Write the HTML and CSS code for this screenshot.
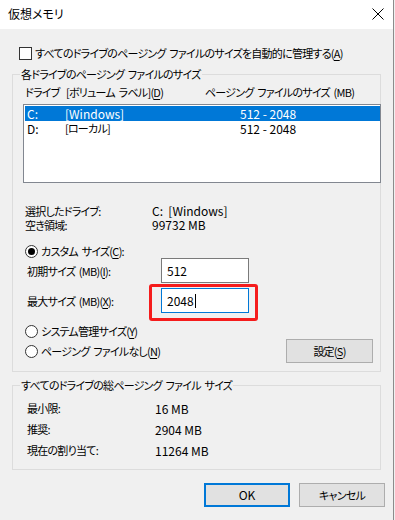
FILE: index.html
```html
<!DOCTYPE html>
<html lang="ja">
<head>
<meta charset="utf-8">
<title>仮想メモリ</title>
<link rel="stylesheet" href="styles.css">
</head>
<body>
<div class="window">
  <div class="titlebar">
    <span class="title">仮想メモリ</span>
    <svg class="close" width="12" height="12" viewBox="0 0 12 12"><path d="M0.5 0.5 L11.5 11.5 M11.5 0.5 L0.5 11.5" stroke="#000" stroke-width="1" fill="none"/></svg>
  </div>
  <div class="content">
    <div class="auto"><span class="checkbox"></span><span class="txt">すべてのドライブのページング ファイルのサイズを自動的に管理する(<u>A</u>)</span></div>

    <fieldset class="group g1">
      <legend>各ドライブのページング ファイルのサイズ</legend>
      <div class="head"><span>ドライブ</span><span>[ボリューム ラベル](<u>D</u>)</span><span>ページング ファイルのサイズ (MB)</span></div>
      <div class="list">
        <div class="row sel"><span class="lat">C:</span><span class="lat">[Windows]</span><span class="lat">512 - 2048</span></div>
        <div class="row"><span class="lat">D:</span><span>[ローカル]</span><span class="lat">512 - 2048</span></div>
      </div>
      <div class="info">
        <span>選択したドライブ:</span><span class="lat">C:&nbsp; [Windows]</span>
        <span>空き領域:</span><span class="lat">99732 MB</span>
      </div>
      <div class="radio r-custom"><span class="rb on"></span><span>カスタム サイズ(<u>C</u>):</span></div>
      <div class="field f1"><span class="flabel">初期サイズ (MB)(<u>I</u>):</span><span class="edit lat">512</span></div>
      <div class="field f2"><span class="flabel">最大サイズ (MB)(<u>X</u>):</span><span class="editwrap"><span class="edit focus lat">2048<span class="caret"></span></span><span class="mark"></span></span></div>
      <div class="radio r-sys"><span class="rb"></span><span>システム管理サイズ(<u>Y</u>)</span></div>
      <div class="lastrow">
        <div class="radio"><span class="rb"></span><span>ページング ファイルなし(<u>N</u>)</span></div>
        <span class="btn set">設定(<u>S</u>)</span>
      </div>
    </fieldset>

    <fieldset class="group g2">
      <legend>すべてのドライブの総ページング ファイル サイズ</legend>
      <div class="totals">
        <span>最小限:</span><span class="lat">16 MB</span>
        <span>推奨:</span><span class="lat">2904 MB</span>
        <span>現在の割り当て:</span><span class="lat">11264 MB</span>
      </div>
    </fieldset>

    <div class="buttons">
      <span class="btn ok lat">OK</span>
      <span class="btn cancel">キャンセル</span>
    </div>
  </div>
</div>
</body>
</html>
```
FILE: styles.css
```css
html, body {
  margin: 0;
  padding: 0;
  background: #f0f0f0;
}
body {
  font-family: "Noto Sans CJK JP", "Noto Sans", sans-serif;
  font-size: 11px;
  letter-spacing: -0.75px;
  word-spacing: 2px;
  line-height: 14px;
  color: #000;
  font-feature-settings: "palt";
  white-space: nowrap;
}
.lat {
  font-size: 12px;
  letter-spacing: 0;
  word-spacing: 0;
}
u { text-decoration-thickness: 1px; text-underline-offset: 2px; }
.window {
  width: 393px;
  height: 520px;
  border-right: 1px solid #8c8c8c;
  background: #f0f0f0;
  overflow: hidden;
}
.titlebar {
  height: 29px;
  background: #fff;
  display: flex;
  align-items: center;
  justify-content: space-between;
  padding: 0 9px 0 8px;
}
.title { font-size: 12px; letter-spacing: 0; margin-top: -2px; }
.close { margin-top: -1px; }
.content { padding-top: 17px; }
.auto {
  display: flex;
  align-items: center;
  height: 14px;
  padding-left: 19px;
}
.checkbox {
  width: 13px; height: 13px;
  box-sizing: border-box;
  border: 1px solid #333;
  background: #fff;
  margin-right: 3px;
}
.group {
  margin: 7px 0 0 12px;
  width: 369px;
  box-sizing: border-box;
  border: 1px solid #dcdcdc;
  padding: 0 0 8px 10px;
  min-width: 0;
}
.group legend {
  padding: 0 1px;
  margin-left: -3px;
  line-height: 15px;
}
.head {
  display: grid;
  grid-template-columns: 41px 139px auto;
  padding-left: 2px;
  margin-top: 3px;
}
.list {
  margin-top: 5px;
  width: 358px;
  height: 79px;
  box-sizing: border-box;
  border: 1px solid #828790;
  background: #fff;
  padding: 1px 0 0 1px;
}
.row {
  display: grid;
  grid-template-columns: 38px 175px auto;
  padding-left: 2px;
  height: 15px;
  line-height: 15px;
}
.row.sel { background: #0078d7; color: #fff; }
.info {
  display: grid;
  grid-template-columns: 127px auto;
  padding-left: 2px;
  margin-top: 21px;
}
.radio {
  display: flex;
  align-items: center;
  height: 14px;
  padding-left: 2px;
}
.rb {
  width: 13px; height: 13px;
  box-sizing: border-box;
  border: 1px solid #333;
  border-radius: 50%;
  background: #fff;
  margin-right: 3px;
  display: flex;
  align-items: center;
  justify-content: center;
}
.rb.on::after {
  content: "";
  width: 7px; height: 7px;
  border-radius: 50%;
  background: #000;
}
.r-custom { margin-top: 12px; }
.field {
  display: grid;
  grid-template-columns: 138px 88px;
  align-items: center;
}
.flabel { padding-left: 4px; }
.f2 { margin-top: 5px; }
.edit {
  display: flex;
  align-items: center;
  height: 25px;
  box-sizing: border-box;
  border: 1px solid #7a7a7a;
  background: #fff;
  padding-left: 5px;
}
.edit.focus { border-color: #0078d7; }
.editwrap { position: relative; display: block; }
.caret {
  display: inline-block;
  width: 1px;
  height: 14px;
  background: #000;
  margin-left: 1px;
}
.mark {
  position: absolute;
  left: -12px;
  top: -4px;
  width: 109px;
  height: 37px;
  box-sizing: border-box;
  border: 3px solid #f51c1c;
  border-radius: 3px;
}
.r-sys { margin-top: 11px; }
.lastrow {
  display: flex;
  align-items: center;
  justify-content: space-between;
  height: 24px;
  margin-top: 1px;
}
.btn {
  display: flex;
  align-items: center;
  justify-content: center;
  width: 87px;
  height: 24px;
  box-sizing: border-box;
  border: 1px solid #adadad;
  background: #e1e1e1;
}
.set { margin-right: 7px; }
.g2 { margin-top: 6px; }
.totals {
  display: grid;
  grid-template-columns: 128px auto;
  line-height: 21px;
  padding-left: 4px;
  margin-top: 5px;
}
.buttons {
  display: flex;
  justify-content: flex-end;
  gap: 9px;
  margin: 13px 8px 0 0;
}
.buttons .btn { width: 86px; }
.ok { border: 2px solid #0078d7; }
```
